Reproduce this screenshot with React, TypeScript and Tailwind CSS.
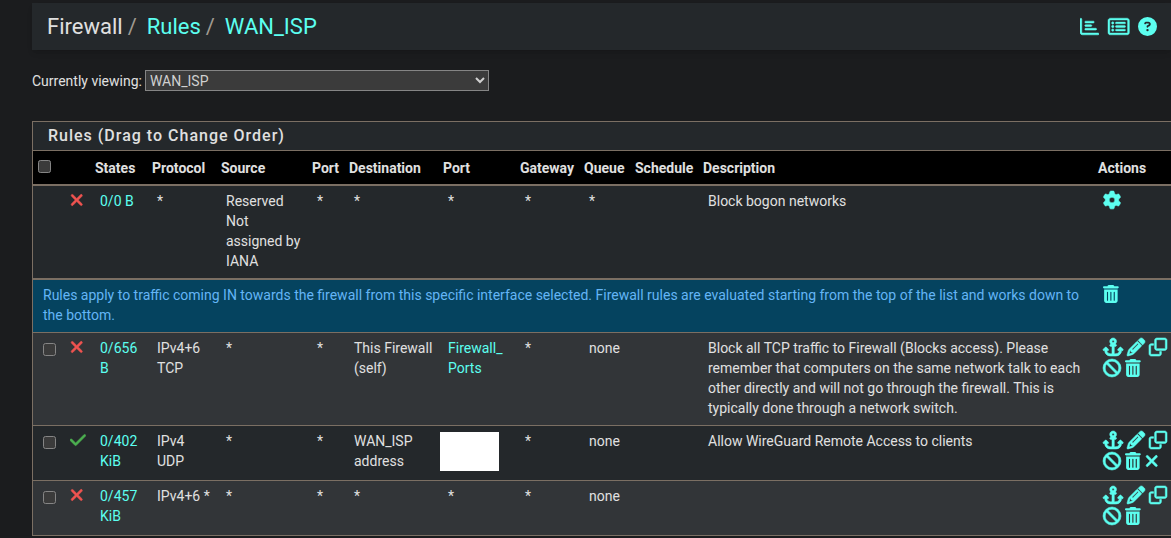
import React from "react";
import {
  FaBan,
  FaCircleQuestion,
  FaGear,
  FaPencil,
  FaRegChartBar,
  FaRegClone,
} from "react-icons/fa6";

type IconProps = { className?: string };
type Action = { label: string; icon: React.ComponentType<IconProps>; solid?: boolean };

type Rule = {
  id: string;
  selectable: boolean;
  pass: boolean;
  states: string;
  protocol: string;
  source: string;
  sourcePort: string;
  destination: string;
  destinationPort: "link" | "hidden" | "any";
  queue: string;
  description: string;
  actions: Action[];
};

function AnchorIcon({ className }: IconProps) {
  return (
    <svg viewBox="0 0 576 512" fill="currentColor" stroke="currentColor" strokeWidth="0" className={className} aria-hidden="true">
      <path d="M320 96a32 32 0 1 1 -64 0 32 32 0 1 1 64 0zm21.1 80C367 158.8 384 129.4 384 96c0-53-43-96-96-96s-96 43-96 96c0 33.4 17 62.8 42.9 80H224c-17.7 0-32 14.3-32 32s14.3 32 32 32h32V448H208c-53 0-96-43-96-96v-6.1l7 7c9.4 9.4 24.6 9.4 33.9 0s9.4-24.6 0-33.9L97 263c-9.4-9.4-24.6-9.4-33.9 0L7 319c-9.4 9.4-9.4 24.6 0 33.9s24.6 9.4 33.9 0l7-7V352c0 88.4 71.6 160 160 160h80 80c88.4 0 160-71.6 160-160v-6.1l7 7c9.4 9.4 24.6 9.4 33.9 0s9.4-24.6 0-33.9l-56-56c-9.4-9.4-24.6-9.4-33.9 0l-56 56c-9.4 9.4-9.4 24.6 0 33.9s24.6 9.4 33.9 0l7-7V352c0 53-43 96-96 96H320V240h32c17.7 0 32-14.3 32-32s-14.3-32-32-32H341.1z" />
    </svg>
  );
}

function CrossIcon({ className }: IconProps) {
  return (
    <svg viewBox="0 0 384 512" fill="currentColor" stroke="currentColor" strokeWidth="0" className={className} aria-hidden="true">
      <path d="M342.6 150.6c12.5-12.5 12.5-32.8 0-45.3s-32.8-12.5-45.3 0L192 210.7 86.6 105.4c-12.5-12.5-32.8-12.5-45.3 0s-12.5 32.8 0 45.3L146.7 256 41.4 361.4c-12.5 12.5-12.5 32.8 0 45.3s32.8 12.5 45.3 0L192 301.3 297.4 406.6c12.5 12.5 32.8 12.5 45.3 0s12.5-32.8 0-45.3L237.3 256 342.6 150.6z" />
    </svg>
  );
}

function CheckIcon({ className }: IconProps) {
  return (
    <svg viewBox="0 0 448 512" fill="currentColor" stroke="currentColor" strokeWidth="0" className={className} aria-hidden="true">
      <path d="M438.6 105.4c12.5 12.5 12.5 32.8 0 45.3l-256 256c-12.5 12.5-32.8 12.5-45.3 0l-128-128c-12.5-12.5-12.5-32.8 0-45.3s32.8-12.5 45.3 0L160 338.7 393.4 105.4c12.5-12.5 32.8-12.5 45.3 0z" />
    </svg>
  );
}

function TrashIcon({ className }: IconProps) {
  return (
    <svg viewBox="0 0 448 512" fill="currentColor" stroke="currentColor" strokeWidth="0" className={className} aria-hidden="true">
      <path d="M135.2 17.7C140.6 6.8 151.7 0 163.8 0H284.2c12.1 0 23.2 6.8 28.6 17.7L320 32h96c17.7 0 32 14.3 32 32s-14.3 32-32 32H32C14.3 96 0 81.7 0 64S14.3 32 32 32h96l7.2-14.3zM32 128H416V448c0 35.3-28.7 64-64 64H96c-35.3 0-64-28.7-64-64V128zm96 64c-8.8 0-16 7.2-16 16V432c0 8.8 7.2 16 16 16s16-7.2 16-16V208c0-8.8-7.2-16-16-16zm96 0c-8.8 0-16 7.2-16 16V432c0 8.8 7.2 16 16 16s16-7.2 16-16V208c0-8.8-7.2-16-16-16zm96 0c-8.8 0-16 7.2-16 16V432c0 8.8 7.2 16 16 16s16-7.2 16-16V208c0-8.8-7.2-16-16-16z" />
    </svg>
  );
}

function ListIcon({ className }: IconProps) {
  return (
    <svg viewBox="0 0 576 512" fill="currentColor" stroke="currentColor" strokeWidth="0" className={className} aria-hidden="true">
      <path d="M64 80c-8.8 0-16 7.2-16 16V416c0 8.8 7.2 16 16 16H512c8.8 0 16-7.2 16-16V96c0-8.8-7.2-16-16-16H64zM0 96C0 60.7 28.7 32 64 32H512c35.3 0 64 28.7 64 64V416c0 35.3-28.7 64-64 64H64c-35.3 0-64-28.7-64-64V96z" />
      {[160, 256, 352].map((y) => (
        <React.Fragment key={y}>
          <circle cx="128" cy={y} r="32" />
          <rect x="200" y={y - 24} width="272" height="48" rx="24" />
        </React.Fragment>
      ))}
    </svg>
  );
}

const baseActions: Action[] = [
  { label: "Move checked rules above this one", icon: AnchorIcon },
  { label: "Edit", icon: FaPencil },
  { label: "Copy", icon: FaRegClone },
  { label: "Disable", icon: FaBan },
  { label: "Delete this rule", icon: TrashIcon, solid: true },
];

const bogonRule: Rule = {
  id: "bogon",
  selectable: false,
  pass: false,
  states: "0/0 B",
  protocol: "*",
  source: "Reserved Not assigned by IANA",
  sourcePort: "*",
  destination: "*",
  destinationPort: "any",
  queue: "*",
  description: "Block bogon networks",
  actions: [{ label: "Settings", icon: FaGear }],
};

const rules: Rule[] = [
  {
    id: "block-tcp",
    selectable: true,
    pass: false,
    states: "0/656 B",
    protocol: "IPv4+6 TCP",
    source: "*",
    sourcePort: "*",
    destination: "This Firewall (self)",
    destinationPort: "link",
    queue: "none",
    description:
      "Block all TCP traffic to Firewall (Blocks access). Please remember that computers on the same network talk to each other directly and will not go through the firewall. This is typically done through a network switch.",
    actions: baseActions,
  },
  {
    id: "wireguard",
    selectable: true,
    pass: true,
    states: "0/402 KiB",
    protocol: "IPv4 UDP",
    source: "*",
    sourcePort: "*",
    destination: "WAN_ISP address",
    destinationPort: "hidden",
    queue: "none",
    description: "Allow WireGuard Remote Access to clients",
    actions: [...baseActions, { label: "Kill states", icon: CrossIcon }],
  },
  {
    id: "default-block",
    selectable: true,
    pass: false,
    states: "0/457 KiB",
    protocol: "IPv4+6 *",
    source: "*",
    sourcePort: "*",
    destination: "*",
    destinationPort: "any",
    queue: "none",
    description: "",
    actions: baseActions,
  },
];

const columns = [
  { label: "States", width: "w-[57px]" },
  { label: "Protocol", width: "w-[69px]" },
  { label: "Source", width: "w-[91px]" },
  { label: "Port", width: "w-[37px]" },
  { label: "Destination", width: "w-[94px]" },
  { label: "Port", width: "w-[77px]" },
  { label: "Gateway", width: "w-[64px]" },
  { label: "Queue", width: "w-[51px]" },
  { label: "Schedule", width: "w-[68px]" },
  { label: "Description", width: "" },
  { label: "Actions", width: "w-[78px]" },
];

const cellY = "pt-[5px] pb-[7px]";
const cell = "pt-[5px] pb-[7px] pl-[10px]";

function Actions({ items }: { items: Action[] }) {
  return (
    <div className="flex flex-wrap gap-x-1">
      {items.map(({ label, icon: Icon, solid }) => (
        <a key={label} href="#" aria-label={label} className="flex h-[21px] items-start text-[#5cfff0]">
          <Icon className={solid ? "h-[18px] w-auto overflow-visible" : "h-[18px] w-auto overflow-visible stroke-[16]"} />
        </a>
      ))}
    </div>
  );
}

function RuleRow({ rule, className }: { rule: Rule; className: string }) {
  return (
    <tr className={`align-top ${className}`}>
      <td className={cell}>
        {rule.selectable && (
          <input type="checkbox" aria-label={`Select rule ${rule.id}`} className="mt-[5px] block size-[13px]" />
        )}
      </td>
      <td className={`${cellY} pl-[9px]`}>
        {rule.pass ? (
          <CheckIcon className="h-[18px] w-auto stroke-[14] text-[#4caf50]" />
        ) : (
          <CrossIcon className="h-[18px] w-auto stroke-[14] text-[#ef5350]" />
        )}
      </td>
      <td className={cell}>
        <a href="#" className="text-[#5cfff0]">{rule.states}</a>
      </td>
      <td className={`${cell} pr-[3px]`}>{rule.protocol}</td>
      <td className={cell}>{rule.source}</td>
      <td className={cell}>{rule.sourcePort}</td>
      <td className={cell}>{rule.destination}</td>
      {rule.destinationPort === "hidden" ? (
        <td className="px-[2px] pt-[6px]">
          <div className="h-[39px] w-[59px] bg-white" />
        </td>
      ) : (
        <td className={cell}>
          {rule.destinationPort === "link" ? (
            <a href="#" className="text-[#5cfff0]">
              Firewall_<wbr />Ports
            </a>
          ) : (
            "*"
          )}
        </td>
      )}
      <td className={cell}>*</td>
      <td className={cell}>{rule.queue}</td>
      <td className={cell}></td>
      <td className={`${cell} pr-[10px]`}>{rule.description}</td>
      <td className={cell}>
        <Actions items={rule.actions} />
      </td>
    </tr>
  );
}

export default function App() {
  return (
    <div className="min-h-screen bg-[#1b1c1e] pt-[3px] pl-8 font-['Roboto',sans-serif] text-sm text-[#e0e0e0] [color-scheme:dark]">
      <header className="flex h-[47px] items-center justify-between bg-[#24282b] pr-[14px] pl-[15px] shadow-md">
        <nav aria-label="Breadcrumb">
          <ol className="flex text-[22px]">
            <li>Firewall</li>
            <li className="flex">
              <span className="pr-[10px] pl-[5px] text-[#a09a90]">/</span>
              <a href="#" className="text-[#5cfff0]">Rules</a>
            </li>
            <li className="flex">
              <span className="pr-[10px] pl-[5px] text-[#a09a90]">/</span>
              <a href="#" className="text-[#5cfff0]">WAN_ISP</a>
            </li>
          </ol>
        </nav>
        <div className="flex gap-[9px] text-[#5cfff0]">
          <a href="#" aria-label="Status"><FaRegChartBar className="h-[19px] w-auto stroke-[14]" /></a>
          <a href="#" aria-label="Logs"><ListIcon className="h-[19px] w-auto overflow-visible stroke-[12]" /></a>
          <a href="#" aria-label="Help"><FaCircleQuestion className="h-[19px] w-auto" /></a>
        </div>
      </header>

      <div className="flex items-center gap-[3px] pt-5">
        <label htmlFor="interface">Currently viewing:</label>
        <select
          id="interface"
          className="h-[21px] w-[344px] border border-[#858585] bg-[#3b3b3b] text-[#d0d0d0]"
        >
          <option>WAN_ISP</option>
        </select>
      </div>

      <section className="mt-[30px] border-t border-b border-l border-[#7b6f63] bg-[#24282b]">
        <h2 className="px-[15px] text-[16px] leading-7 font-medium tracking-[1px]">Rules (Drag to Change Order)</h2>
        <table className="w-full table-fixed border-collapse text-left leading-5">
          <thead className="border-t border-b-2 border-[#7b6f63] bg-black">
            <tr className="h-[34px]">
              <th className="w-[28px] pl-[5px] align-top">
                <input type="checkbox" aria-label="Select all rules" className="mt-[9px] block size-[13px]" />
              </th>
              <th className="w-[29px]"></th>
              {columns.map((c, i) => (
                <th key={i} className={`pt-[2px] pl-[5px] font-bold whitespace-nowrap ${c.width}`}>{c.label}</th>
              ))}
            </tr>
          </thead>
          <tbody>
            <RuleRow rule={bogonRule} className="bg-[#24282b]" />
          </tbody>
          <tbody className="border-t-2 border-[#7b6f63]">
            <tr className="bg-[#05435f] align-top text-[#64b5f6]">
              <td colSpan={12} className={cell}>
                Rules apply to traffic coming IN towards the firewall from this specific interface selected. Firewall
                rules are evaluated starting from the top of the list and works down to the bottom.
              </td>
              <td className={cell}>
                <Actions items={[{ label: "Delete separator", icon: TrashIcon, solid: true }]} />
              </td>
            </tr>
            {rules.map((rule, i) => (
              <RuleRow
                key={rule.id}
                rule={rule}
                className={i % 2 === 0 ? "border-t border-[#7b6f63] bg-[#323538]" : "border-t border-[#7b6f63] bg-[#24282b]"}
              />
            ))}
          </tbody>
        </table>
      </section>
    </div>
  );
}
